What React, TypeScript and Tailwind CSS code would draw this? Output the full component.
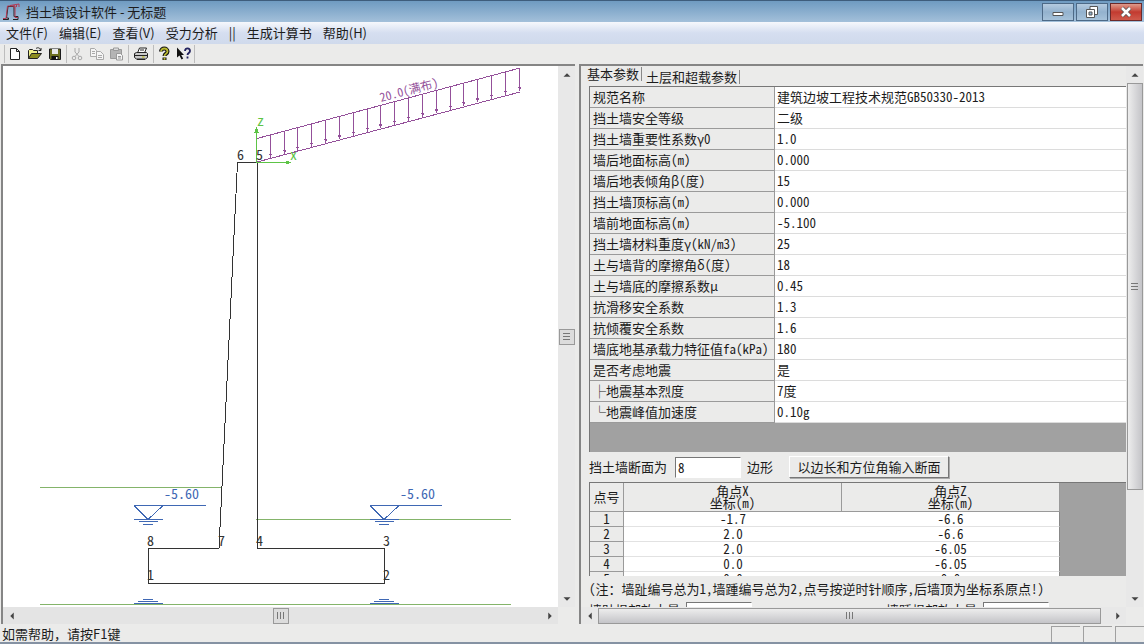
import { useState } from "react";
import type { ReactNode } from "react";
import clsx from "clsx";

const menus = ["文件(F)", "编辑(E)", "查看(V)", "受力分析", "||", "生成计算书", "帮助(H)"];

const params = [
  ["规范名称", "建筑边坡工程技术规范GB50330-2013"],
  ["挡土墙安全等级", "二级"],
  ["挡土墙重要性系数γ0", "1.0"],
  ["墙后地面标高(m)", "0.000"],
  ["墙后地表倾角β(度)", "15"],
  ["挡土墙顶标高(m)", "0.000"],
  ["墙前地面标高(m)", "-5.100"],
  ["挡土墙材料重度γ(kN/m3)", "25"],
  ["土与墙背的摩擦角δ(度)", "18"],
  ["土与墙底的摩擦系数μ", "0.45"],
  ["抗滑移安全系数", "1.3"],
  ["抗倾覆安全系数", "1.6"],
  ["墙底地基承载力特征值fa(kPa)", "180"],
  ["是否考虑地震", "是"],
  ["├地震基本烈度", "7度"],
  ["└地震峰值加速度", "0.10g"],
];

const points = [
  ["1", "-1.7", "-6.6"],
  ["2", "2.0", "-6.6"],
  ["3", "2.0", "-6.05"],
  ["4", "0.0", "-6.05"],
  ["5", "0.0", "0.0"],
];

const nodes = [
  { n: "1", x: 147, y: 580 },
  { n: "2", x: 383, y: 580 },
  { n: "3", x: 383, y: 546 },
  { n: "4", x: 256, y: 546 },
  { n: "5", x: 256, y: 160 },
  { n: "6", x: 237, y: 160 },
  { n: "7", x: 218, y: 546 },
  { n: "8", x: 147, y: 546 },
];

const Divider = () => <span className="h-[18px] w-px bg-[#bdbdbd]" />;

const ToolButton = ({ label, children }: { label: string; children: ReactNode }) => (
  <button type="button" aria-label={label} className="flex h-5 w-5 items-center justify-center">
    <svg width="16" height="16" viewBox="0 0 16 16" fill="none">
      {children}
    </svg>
  </button>
);

const Toolbar = () => (
  <div className="flex h-5 shrink-0 items-center bg-[#ebebea] pl-1">
    <Divider />
    <div className="flex pr-px">
      <ToolButton label="新建">
        <path d="M3.5 2.5h6l3 3v8h-9zM9.5 2.5v3h3" fill="#fff" stroke="#222" />
      </ToolButton>
      <ToolButton label="打开">
        <path d="M1.5 12.5v-8l1-1h3l1 1h4v3" fill="#f0f08a" stroke="#222" />
        <path d="M1.5 12.5l3-5h10l-4 5z" fill="#8c8c1e" stroke="#222" />
        <path d="M9 2.5c2-1.500 4-.5 4.500 1.500M14 2v2.500h-2.500" stroke="#222" />
      </ToolButton>
      <ToolButton label="保存">
        <path d="M2.500 3h11v10.500h-10l-1-1z" fill="#6d7020" stroke="#1b1b1b" />
        <path d="M5 3h6v5H5z" fill="#e8e8e8" />
        <path d="M4.500 10h7v3.500h-7z" fill="#111" />
        <path d="M9 11h1.500v2H9z" fill="#fff" />
      </ToolButton>
    </div>
    <Divider />
    <div className="flex pr-px">
      <ToolButton label="剪切">
        <path d="M6 2v4l4 4.500M10 2v4l-4 4.500" stroke="#a9a9a9" />
        <circle cx="5" cy="12" r="1.800" stroke="#a9a9a9" />
        <circle cx="11" cy="12" r="1.800" stroke="#a9a9a9" />
      </ToolButton>
      <ToolButton label="复制">
        <path d="M1.500 2.500h4l2 2v6h-6zM3 5.500h3M3 7.500h3" fill="#f4f4f4" stroke="#a9a9a9" />
        <path d="M7.500 5.500h4l3 3v5h-7zM9 9.500h4M9 11.500h4" fill="#f4f4f4" stroke="#a9a9a9" />
      </ToolButton>
      <ToolButton label="粘贴">
        <path d="M1.500 3.500h11v9h-11z" fill="#b4b4b4" stroke="#9a9a9a" />
        <path d="M4.500 2h5v2.500h-5z" fill="#ddd" stroke="#999" />
        <path d="M7.500 7.500h4l2 2v4.500h-6zM9 10.500h3M9 12h3" fill="#f4f4f4" stroke="#999" />
      </ToolButton>
    </div>
    <Divider />
    <div className="flex px-0.5">
      <ToolButton label="打印">
        <path d="M4.500 7l2-5h7l-2 5z" fill="#fff" stroke="#222" />
        <path d="M1.500 7.500l2-1h10l1 1v4l-2 1.500h-9l-2-1.500z" fill="#c9c9c9" stroke="#222" />
        <path d="M2 9.500h12M4 13.500h8M7 4h4" stroke="#222" />
        <path d="M9 11h2.500" stroke="#b8b800" />
      </ToolButton>
    </div>
    <Divider />
    <div className="flex">
      <ToolButton label="关于">
        <path d="M5 5.500c0-4 6.500-4 6.500 0 0 2.500-3 2-3 4.500M8.500 11.500v2.500" stroke="#111" strokeWidth="4" />
        <path d="M5 5.500c0-4 6.500-4 6.500 0 0 2.500-3 2-3 4.500M8.500 11.700v2" stroke="#b9b930" strokeWidth="1.800" />
      </ToolButton>
      <ToolButton label="帮助">
        <path d="M1 1.500v10l2.500-2 2 4 1.700-1-2-3.500H8z" fill="#111" />
        <path d="M9 5c0-3.500 5-3.500 5 0 0 2-2.500 2-2.500 4M11.500 10.500v2" stroke="#23235f" strokeWidth="1.800" />
      </ToolButton>
    </div>
    <Divider />
  </div>
);

const arrows = {
  up: "M8 6l4 4H4z",
  down: "M8 10L4 6h8z",
  left: "M6 8l4-4v8z",
  right: "M10 8L6 4v8z",
};

const ScrollArrow = ({ dir }: { dir: keyof typeof arrows }) => (
  <button type="button" aria-label={dir} className="flex h-[17px] w-[17px] shrink-0 items-center justify-center">
    <svg width="14" height="14" viewBox="0 0 16 16">
      <path d={arrows[dir]} fill="#444" />
    </svg>
  </button>
);

const Grip = ({ vertical }: { vertical?: boolean }) => (
  <span className={clsx("flex gap-0.5", vertical && "flex-col")}>
    {[0, 1, 2].map((i) => (
      <span key={i} className={clsx("bg-[#777]", vertical ? "h-px w-[7px]" : "h-[7px] w-px")} />
    ))}
  </span>
);

const WaterMark = ({ x }: { x: number }) => (
  <g stroke="#3f68b4" fill="none">
    <path d={`M${x - 14} 505.5h72M${x - 14} 505.5l14 14l15-14M${x - 14} 519.5h29M${x - 9} 521.5h19M${x - 5} 524.5h10`} />
    <path d={`M${x - 5} 599.5h10M${x - 10} 601.5h20M${x - 14} 603.5h29`} />
    <text x={x + 16} y="499" fill="#3f68b4" stroke="none">
      -5.60
    </text>
  </g>
);

const Drawing = () => (
  <svg
    viewBox="3 66 555 541"
    preserveAspectRatio="xMinYMin meet"
    shapeRendering="crispEdges"
    className="h-full w-full bg-white text-[14px] [font-feature-settings:'hwid']"
  >
    <path d="M40 487.500h182M256 519.500h255M40 604.500h471" stroke="#84b46a" fill="none" />
    <path
      d="M148.500 583.500h236v-35h-127.500v-386h-19.500c-1 20-8 160-18.500 386h-70.500z"
      stroke="#333"
      fill="none"
    />
    <g stroke="#94509a" fill="none">
      <path d="M257 138.500L520 68M257 162L520 92" />
      {Array.from({ length: 19 }, (_, i) => {
        const x = Math.round(257 + 13.83 * (i + 1)) - 0.5;
        const top = 138.5 - (x - 257) * 0.268;
        return (
          <g key={i}>
            <path d={`M${x} ${top}v23`} />
            <path d={`M${x - 1.5} ${top + 19}h3l-1.500 4z`} fill="#94509a" stroke="none" />
            <path d={`M${x - 1} ${top + 20}h2`} />
          </g>
        );
      })}
    </g>
    <text x="381" y="102" transform="rotate(-15 381 102)" fontSize="12" fill="#94509a">
      20.0(满布)
    </text>
    <g stroke="#5dc446" fill="#5dc446">
      <path d="M256.500 162.500v-32M256.500 162.500h32" />
      <path d="M255 132l1.500-4 1.500 4zM286 161l4 1.500-4 1.500z" />
    </g>
    <g fill="#5dc446">
      <text x="257" y="126">z</text>
      <text x="290" y="160">x</text>
    </g>
    <WaterMark x={148} />
    <WaterMark x={384} />
    <g fill="#333">
      {nodes.map((p) => (
        <text key={p.n} x={p.x} y={p.y}>
          {p.n}
        </text>
      ))}
    </g>
  </svg>
);

const DrawingPane = () => (
  <section className="flex min-h-0 min-w-0 flex-col border-l-2 border-t-2 border-[#858585] bg-[#ebebea]">
    <div className="flex min-h-0 flex-1">
      <div className="min-w-0 flex-1 bg-white">
        <Drawing />
      </div>
      <div className="flex w-[17px] flex-col items-center bg-[#e8e8e8]">
        <ScrollArrow dir="up" />
        <div className="flex flex-1 items-center">
          <div className="flex h-4 w-4 items-center justify-center border border-[#999] bg-[#dcdcdc]">
            <Grip vertical />
          </div>
        </div>
        <ScrollArrow dir="down" />
      </div>
    </div>
    <div className="flex h-[17px] shrink-0 items-center pr-[17px]">
      <div className="flex h-full flex-1 items-center bg-[#e4e4e4]">
        <ScrollArrow dir="left" />
        <div className="flex flex-1 justify-center">
          <div className="flex h-4 w-4 items-center justify-center border border-[#999] bg-[#dcdcdc]">
            <Grip />
          </div>
        </div>
        <ScrollArrow dir="right" />
      </div>
    </div>
  </section>
);

const ParamTable = () => (
  <div className="border-l border-t border-[#777] bg-[#a1a1a1] pb-[29px]">
    <table className="w-full table-fixed border-separate border-spacing-0">
      <colgroup>
        <col className="w-[185px]" />
        <col />
      </colgroup>
      <tbody>
        {params.map(([name, value]) => (
          <tr key={name} className="h-[21px]">
            <th
              scope="row"
              className="whitespace-nowrap border-b border-r border-[#9a9a9a] bg-[#ebebea] pl-[3px] text-left font-normal leading-5"
            >
              {name}
            </th>
            <td className="whitespace-nowrap border-b border-[#dcdcdc] bg-white pl-0.5 leading-5">{value}</td>
          </tr>
        ))}
      </tbody>
    </table>
  </div>
);

const PointTable = () => (
  <div className="h-[94px] overflow-hidden border-l border-t border-[#777] bg-[#a1a1a1]">
    <table className="w-[470px] table-fixed border-separate border-spacing-0 text-center">
      <colgroup>
        <col className="w-[34px]" />
        <col />
        <col />
      </colgroup>
      <thead>
        <tr className="h-[29px] leading-3">
          {["点号", "角点X", "角点Z"].map((title, i) => (
            <th
              key={title}
              scope="col"
              className="border-b border-r border-[#9a9a9a] bg-[#ebebea] p-0 font-normal"
            >
              {title}
              {i > 0 && (
                <>
                  <br />
                  坐标(m)
                </>
              )}
            </th>
          ))}
        </tr>
      </thead>
      <tbody>
        {points.map(([no, x, z]) => (
          <tr key={no} className="h-[15px] leading-[14px]">
            <th scope="row" className="border-b border-r border-[#9a9a9a] bg-[#ebebea] p-0 font-normal">
              {no}
            </th>
            <td className="border-b border-[#e2e2e2] bg-white p-0">{x}</td>
            <td className="border-b border-r border-b-[#e2e2e2] border-r-[#888] bg-white p-0">{z}</td>
          </tr>
        ))}
      </tbody>
    </table>
  </div>
);

const inputStyle =
  "h-[21px] w-[66px] border border-b-white border-l-[#777] border-r-white border-t-[#777] bg-white pl-0.5 outline-none";

const ParamPane = () => {
  const [tab, setTab] = useState(0);
  const [sides, setSides] = useState("8");

  return (
    <section className="flex min-h-0 min-w-0 flex-col border-l-2 border-t-2 border-[#858585] bg-[#ebebea] text-[13px] [font-feature-settings:'hwid']">
      <div className="flex min-h-0 flex-1">
        <div className="min-w-0 flex-1 overflow-hidden pl-2">
          <div role="tablist" className="flex h-5 items-center">
            {["基本参数", "土层和超载参数"].map((name, i) => (
              <button
                key={name}
                type="button"
                role="tab"
                aria-selected={tab === i}
                onClick={() => setTab(i)}
                className={clsx(
                  "mr-1 border-r border-[#888] pr-0.5 leading-[14px]",
                  tab === i ? "-mt-1 -ml-0.5" : "mt-0.5"
                )}
              >
                {name}
              </button>
            ))}
          </div>
          <ParamTable />
          <div className="flex h-[30px] items-center">
            <label htmlFor="sides" className="w-[86px]">
              挡土墙断面为
            </label>
            <input id="sides" value={sides} onChange={(e) => setSides(e.target.value)} className={inputStyle} />
            <span className="ml-1.5">边形</span>
            <button
              type="button"
              className="ml-4 h-[22px] w-40 whitespace-nowrap border border-b-[#777] border-l-white border-r-[#777] border-t-white bg-[#ebebea] leading-5 shadow-[1px_1px_0_#aaa]"
            >
              以边长和方位角输入断面
            </button>
          </div>
          <PointTable />
          <p className="h-[26px] whitespace-nowrap leading-[26px]">
            (注：墙趾编号总为1,墙踵编号总为2,点号按逆时针顺序,后墙顶为坐标系原点!)
          </p>
          <div className="flex h-[21px] items-start whitespace-nowrap leading-4">
            <label htmlFor="toe" className="w-[97px]">
              墙趾根部放大量:
            </label>
            <input id="toe" className={inputStyle} />
            <label htmlFor="heel" className="ml-[134px] w-[97px]">
              墙踵根部放大量:
            </label>
            <input id="heel" className={inputStyle} />
          </div>
        </div>
        <div className="flex w-[17px] flex-col items-center bg-[#e8e8e8]">
          <ScrollArrow dir="up" />
          <div className="flex w-4 grow-[4] items-center justify-center border border-[#999] bg-linear-to-r from-[#ededed] to-[#c4c4c8]">
            <Grip vertical />
          </div>
          <div className="grow" />
          <ScrollArrow dir="down" />
        </div>
      </div>
      <div className="flex h-[17px] shrink-0 items-center pr-[17px]">
        <div className="flex h-full flex-1 items-center bg-[#e8e8e8]">
          <ScrollArrow dir="left" />
          <div className="mr-2 flex h-4 flex-1 items-center justify-center border border-[#999] bg-linear-to-b from-[#ededed] to-[#c4c4c8]">
            <Grip />
          </div>
          <ScrollArrow dir="right" />
        </div>
      </div>
    </section>
  );
};

const TitleBar = () => (
  <header className="flex h-[22px] shrink-0 items-center border-t border-[#3e5d7c] bg-linear-to-b from-[#6f9bc1] to-[#a3c0da] pl-0.5 pr-0.5">
    <svg width="18" height="18" viewBox="0 0 18 18" fill="none">
      <path d="M1 16.500h5.500V15H4.500l1.500-11.500h6V13.500h4v3h-5" stroke="#222" />
      <path d="M1 15.500h3l1.500-12.500h7.500v11.500H16" stroke="#b33a55" />
      <path d="M8 2.500l9-1.500M12 2v3M14.500 2v2M17 1v3" stroke="#b33a55" />
    </svg>
    <h1 className="ml-1.5 flex-1 text-[13px] leading-5">挡土墙设计软件 - 无标题</h1>
    <div className="flex gap-0.5">
      <button
        type="button"
        aria-label="最小化"
        className="flex h-[18px] w-8 items-center justify-center border border-[#4d6a87] bg-linear-to-b from-[#b5cbdf] via-[#93b2ce] via-50% to-[#a6c2da]"
      >
        <svg width="14" height="12" viewBox="0 0 14 12">
          <path d="M2 6.500h10v3H2z" fill="#fff" stroke="#555" />
        </svg>
      </button>
      <button
        type="button"
        aria-label="还原"
        className="flex h-[18px] w-8 items-center justify-center border border-[#4d6a87] bg-linear-to-b from-[#b5cbdf] via-[#93b2ce] via-50% to-[#a6c2da]"
      >
        <svg width="14" height="14" viewBox="0 0 14 14">
          <path d="M5 1.500h7.500v8H5z" fill="#fff" stroke="#555" />
          <path d="M1.500 4.500h8v8h-8z" fill="#fff" stroke="#555" />
          <path d="M4 7h3v3H4z" fill="#8fb0cd" stroke="#555" />
        </svg>
      </button>
      <button
        type="button"
        aria-label="关闭"
        className="flex h-[18px] w-8 items-center justify-center border border-[#6b2a2a] bg-linear-to-b from-[#dd9a8c] via-[#c23a30] via-50% to-[#cf5a4c]"
      >
        <svg width="14" height="12" viewBox="0 0 14 12">
          <path d="M3 2l8 8M11 2l-8 8" stroke="#555" strokeWidth="4" />
          <path d="M3 2l8 8M11 2l-8 8" stroke="#fff" strokeWidth="2.500" />
        </svg>
      </button>
    </div>
  </header>
);

const App = () => (
  <div className="flex h-screen flex-col overflow-hidden bg-[#ebebea] font-['Noto_Sans_CJK_SC',sans-serif] text-[#1c1c1c]">
    <TitleBar />
    <nav className="flex h-[22px] shrink-0 items-center gap-[11px] bg-linear-to-b from-[#f6f8fc] via-[#d5def0] via-50% to-[#d0daec] pl-1.5 text-[13px]">
      {menus.map((name) => (
        <button key={name} type="button" className="leading-5">
          {name}
        </button>
      ))}
    </nav>
    <Toolbar />
    <main className="grid min-h-0 flex-1 grid-cols-[574fr_564fr] gap-x-1 px-px">
      <DrawingPane />
      <ParamPane />
    </main>
    <footer className="flex h-5 shrink-0 items-end border-b-2 border-[#8592a3] pl-0.5">
      <p className="flex-1 text-[13px] leading-4">如需帮助，请按F1键</p>
      <div className="flex gap-[3px]">
        {[0, 1, 2].map((i) => (
          <span key={i} className="h-4 w-[29px] border-l border-t border-[#a0a0a0]" />
        ))}
      </div>
    </footer>
  </div>
);

export default App;
